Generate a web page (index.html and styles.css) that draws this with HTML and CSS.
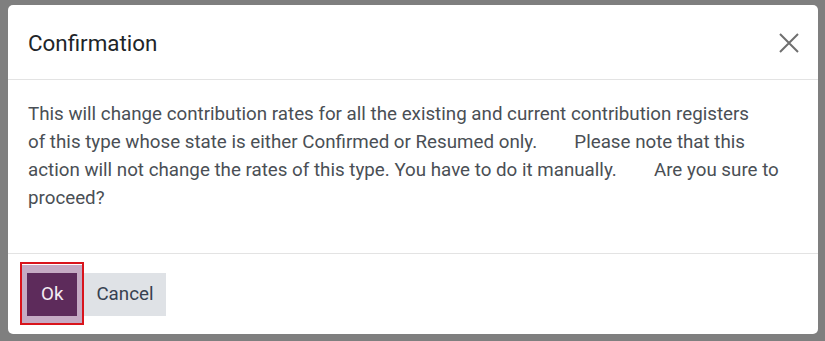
FILE: index.html
```html
<!DOCTYPE html>
<html>
<head>
<meta charset="utf-8">
<link rel="stylesheet" href="styles.css">
</head>
<body>
<div class="dialog">
  <div class="dialog-header">
    <h4 class="dialog-title">Confirmation</h4>
    <button class="close-btn" aria-label="Close">
      <svg width="20" height="20" viewBox="0 0 20 20"><path d="M1 1 L19 19 M19 1 L1 19" stroke="#6f6f6f" stroke-width="2" fill="none"/></svg>
    </button>
  </div>
  <div class="dialog-body">
    <p class="message">This will change contribution rates for all the existing and current contribution registers<br>of this type whose state is either Confirmed or Resumed only.        Please note that this action will not change the rates of this type. You have to do it manually.        Are you sure to proceed?</p>
  </div>
  <div class="dialog-footer">
    <button class="btn btn-primary">Ok</button>
    <button class="btn btn-secondary">Cancel</button>
  </div>
</div>
</body>
</html>
```

FILE: styles.css
```css
html, body {
  margin: 0;
  padding: 0;
}
body {
  background: #7f7f7f;
  font-family: Roboto, "Noto Sans", sans-serif;
  width: 825px;
  height: 341px;
  overflow: hidden;
}
.dialog {
  margin: 5px 0 0 8px;
  width: 810px;
  height: 329px;
  background: #ffffff;
  border-radius: 5px;
  display: flex;
  flex-direction: column;
  overflow: hidden;
}
.dialog-header {
  border-bottom: 1px solid #e3e3e3;
  display: flex;
  align-items: center;
  justify-content: space-between;
  padding: 1px 19px 0 20px;
  box-sizing: border-box;
  flex: 0 0 75px;
}
.dialog-title {
  margin: 0;
  font-size: 22.4px;
  font-weight: 400;
  line-height: 28px;
  color: #212529;
}
.close-btn {
  border: 0;
  background: transparent;
  padding: 0;
  width: 20px;
  height: 20px;
  display: flex;
  cursor: pointer;
}
.dialog-body {
  flex: 0 0 173px;
  box-sizing: border-box;
  padding: 20px 30px 0 20px;
}
.message {
  margin: 0;
  font-size: 18.75px;
  line-height: 28px;
  color: #4a4f55;
  white-space: pre-wrap;
}
.dialog-footer {
  flex: 1 1 auto;
  border-top: 1px solid #e3e3e3;
  display: flex;
  align-items: flex-start;
  gap: 6px;
  padding: 19px 19px 0 19px;
}
.btn {
  font-family: Roboto, "Noto Sans", sans-serif;
  font-size: 18.75px;
  line-height: 25px;
  padding: 9px 13px;
  border: 0;
  border-radius: 0;
  cursor: pointer;
}
.btn-primary {
  position: relative;
  padding: 9px 14px;
  background: #5d2b5b;
  color: #f4ecf3;
  box-shadow: 0 -3px 0 5px #c5abc4, 0 2px 0 5px #c5abc4;
}
.btn-primary::after {
  content: "";
  position: absolute;
  top: -11px;
  bottom: -9px;
  left: -7px;
  right: -7px;
  border: 2px solid #d9141c;
}
.btn-secondary {
  background: #dfe2e6;
  color: #374151;
}
```
